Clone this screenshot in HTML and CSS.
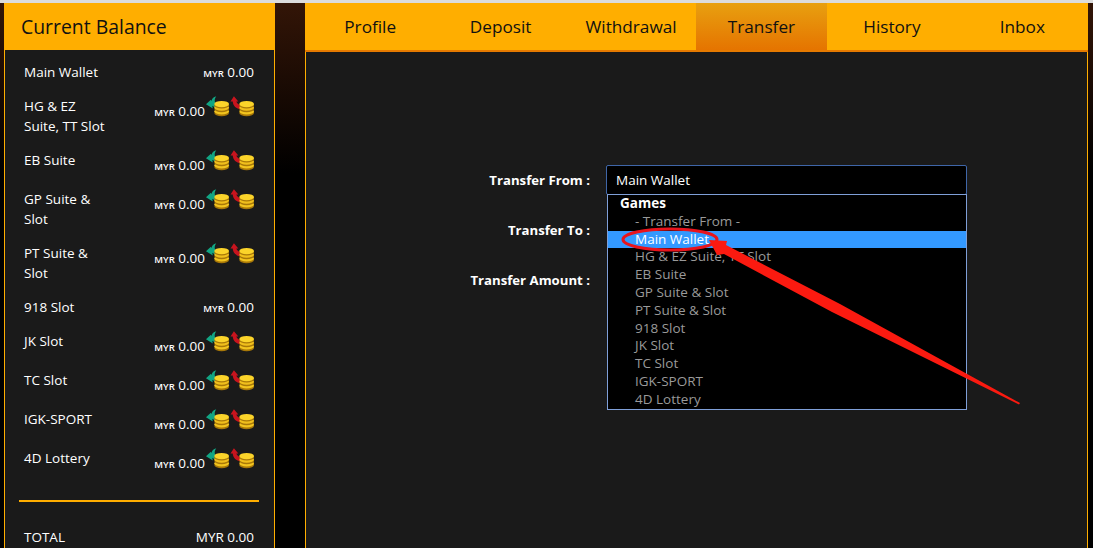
FILE: index.html
```html
<!DOCTYPE html>
<html lang="en">
<head>
<meta charset="utf-8">
<title>Transfer</title>
<link rel="stylesheet" href="styles.css">
</head>
<body>
<svg class="defs" width="0" height="0" aria-hidden="true">
  <defs>
    <g id="coins">
      <ellipse cx="17" cy="18" rx="7.5" ry="3.5" fill="#a87808"/>
      <ellipse cx="17" cy="16.4" rx="7.5" ry="3.3" fill="#f2c41e"/>
      <ellipse cx="17" cy="14" rx="7.5" ry="3.3" fill="#a87808"/>
      <ellipse cx="17" cy="12.6" rx="7.5" ry="3.3" fill="#f0bf1c"/>
      <ellipse cx="17" cy="10.2" rx="7.5" ry="3.3" fill="#a87808"/>
      <ellipse cx="17" cy="9" rx="7.5" ry="3.2" fill="#fbd42a"/>
    </g>
    <symbol id="icon-in" viewBox="0 0 25 24">
      <path d="M11.5 1C8.5 1.8 7 3.5 6.6 5.8L6 4.5 1 9.2 8 13.5 7.4 10.8 11 13 11 8C9.5 7 9.5 3.5 11.5 1Z" fill="#12a583"/>
      <use href="#coins"/>
    </symbol>
    <symbol id="icon-out" viewBox="0 0 25 24">
      <path d="M4 1 8.5 6.5 6.5 6.5C6.8 8 8 9.5 11 10L11 14.5C6.5 14 3 11 2.8 6.5L.5 6.5Z" fill="#c8141e"/>
      <use href="#coins"/>
    </symbol>
  </defs>
</svg>
<div class="page">
  <aside class="balance">
    <h2 class="balance-title">Current Balance</h2>
    <div class="balance-body">
      <div class="row"><span class="name">Main Wallet</span><span class="value"><small>MYR</small> 0.00</span></div>
      <div class="row icons"><span class="name">HG &amp; EZ<br>Suite, TT Slot</span><span class="value"><small>MYR</small> 0.00</span><svg class="ico"><use href="#icon-in"/></svg><svg class="ico"><use href="#icon-out"/></svg></div>
      <div class="row icons"><span class="name">EB Suite</span><span class="value"><small>MYR</small> 0.00</span><svg class="ico"><use href="#icon-in"/></svg><svg class="ico"><use href="#icon-out"/></svg></div>
      <div class="row icons"><span class="name">GP Suite &amp;<br>Slot</span><span class="value"><small>MYR</small> 0.00</span><svg class="ico"><use href="#icon-in"/></svg><svg class="ico"><use href="#icon-out"/></svg></div>
      <div class="row icons"><span class="name">PT Suite &amp;<br>Slot</span><span class="value"><small>MYR</small> 0.00</span><svg class="ico"><use href="#icon-in"/></svg><svg class="ico"><use href="#icon-out"/></svg></div>
      <div class="row"><span class="name">918 Slot</span><span class="value"><small>MYR</small> 0.00</span></div>
      <div class="row icons"><span class="name">JK Slot</span><span class="value"><small>MYR</small> 0.00</span><svg class="ico"><use href="#icon-in"/></svg><svg class="ico"><use href="#icon-out"/></svg></div>
      <div class="row icons"><span class="name">TC Slot</span><span class="value"><small>MYR</small> 0.00</span><svg class="ico"><use href="#icon-in"/></svg><svg class="ico"><use href="#icon-out"/></svg></div>
      <div class="row icons"><span class="name">IGK-SPORT</span><span class="value"><small>MYR</small> 0.00</span><svg class="ico"><use href="#icon-in"/></svg><svg class="ico"><use href="#icon-out"/></svg></div>
      <div class="row icons"><span class="name">4D Lottery</span><span class="value"><small>MYR</small> 0.00</span><svg class="ico"><use href="#icon-in"/></svg><svg class="ico"><use href="#icon-out"/></svg></div>
      <hr class="rule">
      <div class="row total"><span class="name">TOTAL</span><span class="value">MYR 0.00</span></div>
    </div>
  </aside>
  <main class="content">
    <nav class="tabs">
      <a class="tab">Profile</a>
      <a class="tab">Deposit</a>
      <a class="tab">Withdrawal</a>
      <a class="tab active">Transfer</a>
      <a class="tab">History</a>
      <a class="tab">Inbox</a>
    </nav>
    <div class="panel">
      <form class="form">
        <div class="field">
          <label class="label">Transfer From :</label>
          <div class="select">Main Wallet
            <div class="dropdown">
              <div class="group">Games</div>
              <div class="opt">- Transfer From -</div>
              <div class="opt sel">Main Wallet</div>
              <div class="opt">HG &amp; EZ Suite, TT Slot</div>
              <div class="opt">EB Suite</div>
              <div class="opt">GP Suite &amp; Slot</div>
              <div class="opt">PT Suite &amp; Slot</div>
              <div class="opt">918 Slot</div>
              <div class="opt">JK Slot</div>
              <div class="opt">TC Slot</div>
              <div class="opt">IGK-SPORT</div>
              <div class="opt">4D Lottery</div>
            </div>
          </div>
        </div>
        <div class="field"><label class="label">Transfer To :</label></div>
        <div class="field"><label class="label">Transfer Amount :</label></div>
      </form>
    </div>
  </main>
</div>
<svg class="annotation" width="1093" height="548" viewBox="0 0 1093 548" aria-hidden="true">
  <ellipse cx="670" cy="239.5" rx="47" ry="10.5" fill="none" stroke="#e8141c" stroke-width="3"/>
  <path d="M709 240 727 241 726 245 840 304 1020 403 1019 404.500 832 312 724 254 717 255Z" fill="#fb1a10"/>
</svg>
</body>
</html>
```
FILE: styles.css
```css
* { box-sizing: border-box; }
html, body { margin: 0; height: 548px; overflow: hidden; }
body {
  background: #000;
  font-family: "Open Sans", "Liberation Sans", sans-serif;
  font-size: 13.5px;
  color: #fff;
  position: relative;
}
body::before {
  content: "";
  position: absolute;
  left: 0; right: 0; top: 3px;
  height: 170px;
  background: linear-gradient(#331507, #000);
}
.defs { position: absolute; }
.page {
  position: relative;
  display: flex;
  align-items: flex-start;
  gap: 30px;
  height: 548px;
  padding: 3px 5.500px 0 4px;
}
.page::before {
  content: "";
  position: absolute;
  left: 0; right: 0; top: 0;
  height: 3px;
  background: #dcdcdc;
}
.balance { width: 271px; flex: none; }
.balance-title {
  margin: 0;
  height: 47px;
  padding-left: 17px;
  background: #ffae00;
  color: #111;
  font-size: 19.4px;
  font-weight: 400;
  line-height: 47px;
}
.balance-body {
  height: 498px;
  padding: 12px 20px 0 19px;
  background: #1a1a1a;
  border: solid #ffae00;
  border-width: 0 1px;
}
.row {
  display: flex;
  align-items: flex-start;
  margin-bottom: 14px;
  line-height: 20px;
}
.name { margin-right: auto; }
.value { white-space: nowrap; }
.value small { font-size: 9.5px; font-weight: 600; line-height: 1; }
.icons { min-height: 25px; }
.icons .value { margin-top: 5px; }
.ico { width: 24.5px; height: 24px; flex: none; display: block; margin-top: -1px; }
.rule {
  margin: 27px -5px 25px;
  border: 0;
  height: 2px;
  background: #ffae00;
}
.content { flex: 1; min-width: 0; }
.tabs {
  display: grid;
  grid-template-columns: repeat(6, 1fr);
  height: 49px;
  background: #ffae00;
  border-bottom: 2px solid #e57a00;
}
.tab {
  text-align: center;
  line-height: 47px;
  font-size: 17.2px;
  color: #111;
}
.tab.active { background: linear-gradient(#e8a010, #e57400); }
.panel {
  height: 496px;
  background: #1a1a1a;
  border: solid #ffae00;
  border-width: 0 1px;
  padding-top: 113px;
}
.form { display: flex; flex-direction: column; gap: 20px; }
.field { display: flex; height: 30px; align-items: flex-start; }
.label {
  width: 284px;
  flex: none;
  text-align: right;
  font-weight: 700;
  font-size: 13.2px;
  line-height: 30px;
}
.select {
  position: relative;
  margin-left: 16px;
  width: 361px;
  height: 30px;
  padding-left: 9px;
  background: #000;
  border: 1px solid #3f66a8;
  border-radius: 2px;
  line-height: 28px;
}
.dropdown {
  position: absolute;
  left: 0;
  top: 28px;
  width: 360px;
  height: 216px;
  background: #000;
  border: 1px solid #7f9fd8;
  line-height: 17.8px;
}
.group { padding-left: 12px; font-weight: 700; }
.opt { padding-left: 27px; color: #9a9a9a; }
.opt.sel { background: #3399ff; color: #fff; }
.annotation { position: absolute; left: 0; top: 0; pointer-events: none; }
```
